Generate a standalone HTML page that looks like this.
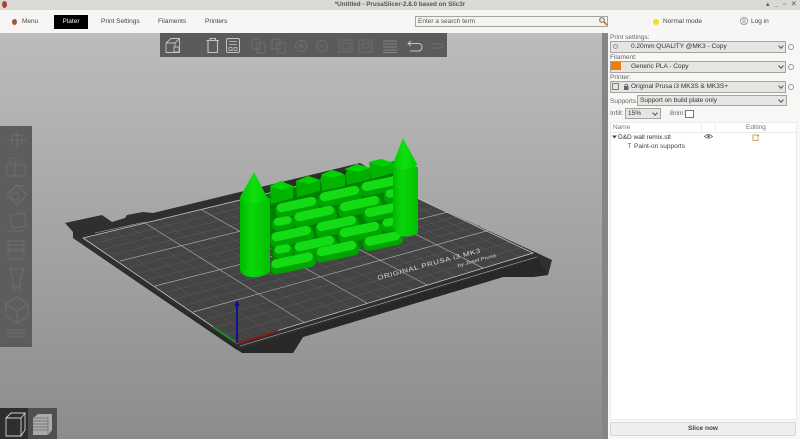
<!DOCTYPE html>
<html><head><meta charset="utf-8"><style>
html,body{margin:0;padding:0;width:800px;height:439px;overflow:hidden;background:#f7f6f4}
body{position:relative;font-family:"Liberation Sans","DejaVu Sans",sans-serif;font-size:6.5px;color:#444;filter:blur(.3px)}
.a{position:absolute;white-space:nowrap}
.box{position:absolute;box-sizing:border-box;border:1px solid #a5a3a0;background:#e6e5e3}
.chev{position:absolute;width:3px;height:3px;border-right:1px solid #555;border-bottom:1px solid #555;transform:rotate(45deg)}
.gear{position:absolute;width:4px;height:4px;border:1.5px solid #999;border-radius:50%;box-sizing:content-box}
</style></head><body>
<div class="a" style="left:0;top:0;width:800px;height:10px;background:#dbd9d5"></div>
<div class="a" style="left:0;top:10px;width:800px;height:23px;background:#f7f6f4"></div>
<div class="a" style="left:2px;top:1px;width:5px;height:7px;border-radius:50%;background:#a8442c"></div>
<div class="a" style="left:0;width:800px;top:1px;text-align:center;font-weight:bold;color:#555;line-height:8px;font-size:6.3px">*Untitled - PrusaSlicer-2.8.0 based on Slic3r</div>
<div class="a" style="left:766px;top:0;font-size:7px;line-height:9px;color:#555;font-weight:bold;word-spacing:3px">▴ _ ▫ ✕</div>
<div class="a" style="left:12px;top:19px;width:5px;height:6px;border-radius:50%;background:#a5533a"></div>
<div class="a" style="left:22px;top:18px;line-height:8px">Menu</div>
<div class="a" style="left:54px;top:15px;width:34px;height:14px;background:#000;color:#eee;text-align:center;line-height:14px">Plater</div>
<div class="a" style="left:101px;top:18px;line-height:8px">Print Settings</div>
<div class="a" style="left:158px;top:18px;line-height:8px">Filaments</div>
<div class="a" style="left:205px;top:18px;line-height:8px">Printers</div>
<div class="box" style="left:415px;top:16px;width:193px;height:11px;background:#f4f3f1;line-height:9px;padding-left:2px;color:#555">Enter a search term</div>
<svg class="a" style="left:598px;top:16px" width="10" height="10"><circle cx="4" cy="4" r="2.3" fill="none" stroke="#8a7a5a" stroke-width="1.2"/><path d="M6 6l3 3" stroke="#b06a20" stroke-width="1.5"/></svg>
<div class="a" style="left:653px;top:19px;width:6px;height:6px;border-radius:50%;background:#f2e01e"></div>
<div class="a" style="left:663px;top:18px;line-height:8px">Normal mode</div>
<svg class="a" style="left:739px;top:16px" width="10" height="10"><circle cx="5" cy="5" r="3.7" fill="none" stroke="#888" stroke-width=".7"/><circle cx="5" cy="4" r="1.3" fill="none" stroke="#888" stroke-width=".6"/><path d="M2.6 7.6q2.4-2 4.8 0" fill="none" stroke="#888" stroke-width=".6"/></svg>
<div class="a" style="left:751px;top:18px;line-height:8px">Log in</div>

<svg class="a" style="left:0;top:33px" width="608" height="406" viewBox="0 33 608 406">
<defs>
<linearGradient id="bg" x1="0" y1="0" x2="0" y2="1"><stop offset="0" stop-color="#bcbcbc"/><stop offset="1" stop-color="#8c8c8c"/></linearGradient>
<linearGradient id="tw" x1="0" y1="0" x2="1" y2="0"><stop offset="0" stop-color="#00b800"/><stop offset=".35" stop-color="#0ad60a"/><stop offset="1" stop-color="#00c000"/></linearGradient>
<linearGradient id="cn" x1="0" y1="0" x2="1" y2="0"><stop offset="0" stop-color="#00c400"/><stop offset=".5" stop-color="#10e010"/><stop offset="1" stop-color="#00cc00"/></linearGradient>
</defs>
<rect x="0" y="33" width="608" height="406" fill="url(#bg)"/>
<rect x="602" y="33" width="6" height="406" fill="#858585"/>
<!-- bed base -->
<path d="M65 223L102 215 112 222 125 218 127 215 143 212 153 213 240 192 360 163 417 198 537 253 552 260 548 275 533 277 503 277 303 337 293 353 242 353 73 238 73 232Z" fill="#2f2f2f"/>
<path d="M83 238L360 171 533 253 237 343Z" fill="#444"/>
<path d="M73 238L237 346 242 353 293 353 303 337 503 277 533 277 548 275 537 258 237 350Z" fill="#282828"/>
<!-- minor grid -->
<g stroke="#626262" stroke-width=".4" fill="none">
<path d="M98.5 234L254 338M114 230.5L271 333M129.500 227L288 328M159 220L320.500 318M173.500 216.500L336 313M188 213L351.500 308M216.500 207L382 298.500M231 203.500L397 294M245.500 200L412 289.500M274 194L441 281M287.500 190.500L455 276.500M301 187L469 272M326 181L495.500 264M337.500 177.500L508 260.500M349 174L520.500 257"/>
<path d="M92 244L370.500 176M101.500 249.500L381 181M111 255L391.500 186M129 267L413.500 196M137.500 273.500L425 201.500M146 280L436.500 207M164.500 292.500L458.500 216.500M174 299L469 221M183.500 305.500L479.500 225.500M204 320L501 236M215 327.500L511.500 241.500M226 335L522.500 247"/>
</g>
<!-- major grid -->
<g stroke="#a8a8a8" stroke-width=".7" fill="none">
<path d="M145 223L305 323M202 210L367 303M260 197L427 285M315 184L483 268"/>
<path d="M120 261L402 191M155 286L448 212M193 312L490 230"/>
</g>
<g stroke="#c8c8c8" stroke-width=".8" fill="none">
<path d="M83 238L237 343 533 253 417 198M83 238L360 171"/>
<path d="M95 233L145 222M240 346L537 257" stroke="#aaa" stroke-width=".6"/>
</g>
<!-- logo -->
<text transform="translate(378 280) rotate(-15) scale(1 .8)" font-family="Liberation Sans" font-size="8" letter-spacing=".6" fill="#d8d8d8">ORIGINAL PRUSA i3 MK3</text>
<text transform="translate(458 267) rotate(-15) scale(1 .8)" font-family="Liberation Sans" font-size="6" fill="#d0d0d0">by Josef Prusa</text>
<!-- axes -->
<path d="M237 343L213 327" stroke="#1f8a25" stroke-width="2"/>
<path d="M238 343L278 331" stroke="#8a1c1c" stroke-width="2"/>
<path d="M237 343V304" stroke="#0a0a9c" stroke-width="1.800"/>
<path d="M234.500 306L237 300 239.500 306Z" fill="#0a0a9c"/>
<!-- wall -->
<path d="M262 196L398 160 410 232 275 274Z" fill="#008000"/>
<!-- crenels -->
<g>
<path d="M270 186L281 181 293 186 293 198 271 204Z" fill="#00b400"/><path d="M270 186L281 181 293 186 282 190Z" fill="#00d400"/>
<path d="M296 181L308 176 320 180 320 191 297 197Z" fill="#00ae00"/><path d="M296 181L308 176 320 180 309 184Z" fill="#00d000"/>
<path d="M320 175L332 170 345 174 345 186 322 191Z" fill="#00b400"/><path d="M320 175L332 170 345 174 333 178Z" fill="#00d400"/>
<path d="M345 169L357 164 370 168 370 179 347 185Z" fill="#00ae00"/><path d="M345 169L357 164 370 168 358 172Z" fill="#00d400"/>
<path d="M369 162L381 159 393 163 393 173 371 179Z" fill="#00b400"/><path d="M369 162L381 159 393 163 382 167Z" fill="#00d000"/>
</g>
<path d="M284 183L296 180 296 184Z M340 172L347 170 345 175Z M314 176L322 174 320 179Z" fill="#1c331c"/>
<!-- stones -->
<g fill="#00a400">
<rect x="360" y="180" width="42" height="13" rx="5" transform="rotate(-12 381 186)"/>
<rect x="318" y="190" width="44" height="14" rx="5" transform="rotate(-12 340 196)"/>
<rect x="275" y="201" width="44" height="14" rx="5" transform="rotate(-12 297 207)"/>
<rect x="384" y="190" width="20" height="12" rx="5" transform="rotate(-10 394 196)"/>
<rect x="338" y="200" width="44" height="14" rx="5" transform="rotate(-12 360 206)"/>
<rect x="293" y="210" width="44" height="14" rx="5" transform="rotate(-12 315 217)"/>
<rect x="272" y="218" width="22" height="12" rx="5" transform="rotate(-10 283 223)"/>
<rect x="363" y="206" width="42" height="13" rx="5" transform="rotate(-12 384 212)"/>
<rect x="315" y="220" width="44" height="14" rx="5" transform="rotate(-12 337 226)"/>
<rect x="270" y="230" width="44" height="14" rx="5" transform="rotate(-12 292 237)"/>
<rect x="381" y="219" width="20" height="12" rx="5" transform="rotate(-10 391 224)"/>
<rect x="338" y="226" width="44" height="14" rx="5" transform="rotate(-12 360 232)"/>
<rect x="293" y="240" width="44" height="14" rx="5" transform="rotate(-12 315 246)"/>
<rect x="273" y="246" width="20" height="12" rx="5" transform="rotate(-10 283 251)"/>
<rect x="363" y="235" width="40" height="13" rx="5" transform="rotate(-12 383 241)"/>
<rect x="315" y="245" width="44" height="14" rx="5" transform="rotate(-12 337 251)"/>
<rect x="270" y="257" width="46" height="14" rx="5" transform="rotate(-12 292 264)"/>
</g>
<g fill="#14dc14">
<rect x="362" y="179" width="38" height="9" rx="4.500" transform="rotate(-12 381 186)"/>
<rect x="320" y="189" width="40" height="9" rx="4.500" transform="rotate(-12 340 196)"/>
<rect x="277" y="200" width="40" height="9" rx="4.500" transform="rotate(-12 297 207)"/>
<rect x="386" y="189" width="16" height="8" rx="4" transform="rotate(-10 394 196)"/>
<rect x="340" y="199" width="40" height="9" rx="4.500" transform="rotate(-12 360 206)"/>
<rect x="295" y="209" width="40" height="9" rx="4.500" transform="rotate(-12 315 217)"/>
<rect x="274" y="217" width="18" height="8" rx="4" transform="rotate(-10 283 223)"/>
<rect x="365" y="205" width="38" height="9" rx="4.500" transform="rotate(-12 384 212)"/>
<rect x="317" y="219" width="40" height="9" rx="4.500" transform="rotate(-12 337 226)"/>
<rect x="272" y="229" width="40" height="9" rx="4.500" transform="rotate(-12 292 237)"/>
<rect x="383" y="218" width="16" height="8" rx="4" transform="rotate(-10 391 224)"/>
<rect x="340" y="225" width="40" height="9" rx="4.500" transform="rotate(-12 360 232)"/>
<rect x="295" y="239" width="40" height="9" rx="4.500" transform="rotate(-12 315 246)"/>
<rect x="275" y="245" width="16" height="8" rx="4" transform="rotate(-10 283 251)"/>
<rect x="365" y="234" width="36" height="9" rx="4.500" transform="rotate(-12 383 241)"/>
<rect x="317" y="244" width="40" height="9" rx="4.500" transform="rotate(-12 337 251)"/>
<rect x="272" y="256" width="42" height="9" rx="4.500" transform="rotate(-12 292 264)"/>
</g>
<!-- towers -->
<path d="M393 167H418V233Q410 238 400 236L393 228Z" fill="url(#tw)"/>
<path d="M392 166L403 138 417 164Q417 168 405 169 394 169 392 166Z" fill="url(#cn)"/>
<path d="M240 198H270V272Q262 278 250 277 242 276 240 270Z" fill="url(#tw)"/>
<path d="M240 197L254 172 268 199Q262 204 252 203 242 202 240 197Z" fill="url(#cn)"/>
<!-- top toolbar -->
<rect x="160" y="33" width="287" height="24" fill="#5b5b5b"/>
<g fill="none" stroke="#c4c4c4" stroke-width=".9">
<path d="M166 43L171 38.500H179.500V52.500H166ZM166 43H175V52.500M175 43L179.500 38.500"/>
<rect x="174" y="47" width="5" height="5" fill="#5b5b5b"/>
<path d="M206.500 40.500H219M208 40.500V52.500H217.500V40.500M210 40.500V38.500H215.500V40.500" stroke-width="1.100"/>
<rect x="226.500" y="38.500" width="13" height="14" rx="1.500" stroke-width="1"/>
<path d="M229 41.500H237M229 44.500H237M229 47.500H232V50.500H229ZM234 47.500H237V50.500H234Z" stroke-width=".8"/>
<path d="M411 41L408 43.500 411 46M408 43.500H418Q422 43.500 422 47 422 51 418 51H410" stroke-width="1"/>
</g>
<g fill="none" stroke="#6f6f6f" stroke-width=".9">
<path d="M252 39H260V49H252ZM257 43H265V53H257ZM272 39H280V49H272ZM277 43H285V53H277Z"/>
<circle cx="301" cy="46" r="5.500"/><path d="M298 46H304M301 43V49"/>
<circle cx="322" cy="46" r="5.500"/><path d="M319 46H325"/>
<rect x="339" y="40" width="13" height="12"/><rect x="342" y="43" width="7" height="6"/>
<rect x="359" y="40" width="13" height="12"/><rect x="363" y="43" width="6" height="5"/>
<path d="M383 41H397M383 44H397M383 47H397M383 50H397M383 52.500H397" stroke="#858585"/>
<path d="M431 44H441Q443 44 443 46T441 48H431"/>
</g>
<!-- left toolbar -->
<rect x="0" y="126" width="32" height="221" fill="#5d5d5d"/>
<g fill="none" stroke="#717171" stroke-width=".8">
<rect x="12" y="135" width="10" height="9"/><path d="M7 140H27M17 130V149"/>
<rect x="7" y="165" width="18" height="11"/><rect x="10" y="158" width="6" height="5"/><path d="M15 165V176"/>
<path d="M17 185L27 195 17 205 7 195ZM12 190Q17 182 24 187"/><circle cx="15" cy="196" r="4"/>
<path d="M10 215L24 213 26 226 12 228ZM6 231H24"/>
<path d="M8 241H24V249H8ZM8 251H24V259H8Z"/><path d="M8 245H24"/>
<path d="M10 269L24 269 20 280V287H13V280ZM14 287V292M19 287V292"/>
<path d="M6 304L17 297 28 304V316L17 323 6 316ZM6 304L17 311 28 304M17 311V323"/>
<rect x="8" y="330" width="16" height="7"/><path d="M9 333H23"/>
</g>
<!-- bottom view switch -->
<rect x="0" y="408" width="28" height="31" fill="#2e2e2e"/>
<rect x="28" y="408" width="29" height="31" fill="#4f4f4f"/>
<path d="M6 418H21V436H6ZM6 418L11 413H25V430L21 436M21 418L25 413" fill="none" stroke="#cfcfcf" stroke-width=".9"/>
<path d="M33 418L38 414H52V430L48 435H33Z" fill="#aaa"/>
<path d="M33 421H48M33 424H48M33 427H48M33 430H48M33 418H48V435" fill="none" stroke="#6c6c6c" stroke-width=".7"/>
</svg>

<!-- right panel -->
<div class="a" style="left:608px;top:33px;width:192px;height:406px;background:#f8f7f5"></div>
<div class="a" style="left:610px;top:34px;line-height:7px;color:#666">Print settings:</div>
<div class="box" style="left:610px;top:41px;width:176px;height:12px;line-height:10px;padding-left:20px;color:#333">0.20mm QUALITY @MK3 - Copy</div>
<div class="gear" style="left:613px;top:44px;width:3px;height:3px"></div>
<div class="chev" style="left:779px;top:44px"></div>
<div class="gear" style="left:788px;top:44px"></div>
<div class="a" style="left:610px;top:54px;line-height:7px;color:#666">Filament:</div>
<div class="box" style="left:610px;top:61px;width:176px;height:12px;line-height:10px;padding-left:20px;color:#333">Generic PLA - Copy</div>
<div class="a" style="left:611px;top:62px;width:10px;height:8px;background:#f07e00"></div>
<div class="chev" style="left:779px;top:64px"></div>
<div class="gear" style="left:788px;top:64px"></div>
<div class="a" style="left:610px;top:74px;line-height:7px;color:#666">Printer:</div>
<div class="box" style="left:610px;top:81px;width:176px;height:12px;line-height:10px;padding-left:20px;color:#333">Original Prusa i3 MK3S &amp; MK3S+</div>
<svg class="a" style="left:612px;top:83px" width="18" height="8"><rect x=".5" y=".5" width="6" height="6" fill="none" stroke="#666" stroke-width=".8"/><rect x="12" y="3" width="4.500" height="4" fill="#666"/><path d="M13 3V1.500H15.500V3" fill="none" stroke="#666" stroke-width=".7"/></svg>
<div class="chev" style="left:779px;top:84px"></div>
<div class="gear" style="left:788px;top:84px"></div>
<div class="a" style="left:610px;top:98px;line-height:7px;color:#666">Supports:</div>
<div class="box" style="left:637px;top:95px;width:150px;height:11px;line-height:9px;padding-left:2px;color:#333">Support on build plate only</div>
<div class="chev" style="left:779px;top:98px"></div>
<div class="a" style="left:610px;top:110px;line-height:7px;color:#666">Infill:</div>
<div class="box" style="left:625px;top:108px;width:36px;height:11px;line-height:9px;padding-left:2px;color:#333">15%</div>
<div class="chev" style="left:653px;top:111px"></div>
<div class="a" style="left:670px;top:110px;line-height:7px;color:#666">Brim:</div>
<div class="a" style="left:685px;top:110px;width:7px;height:6px;border:1px solid #777;background:#fff"></div>
<div class="a" style="left:610px;top:122px;width:187px;height:298px;background:#fff;border:1px solid #ecebe9;box-sizing:border-box"></div>
<div class="a" style="left:611px;top:132px;width:185px;height:1px;background:#eeedeb"></div>
<div class="a" style="left:701px;top:123px;width:1px;height:9px;background:#eeedeb"></div>
<div class="a" style="left:715px;top:123px;width:1px;height:9px;background:#eeedeb"></div>
<div class="a" style="left:613px;top:124px;line-height:7px;color:#777">Name</div>
<div class="a" style="left:746px;top:124px;line-height:7px;color:#777">Editing</div>
<svg class="a" style="left:612px;top:134px" width="6" height="6"><path d="M0 1.500H5L2.500 4.500Z" fill="#444"/></svg>
<div class="a" style="left:618px;top:134px;line-height:7px;color:#333">D&amp;D wall remix.stl</div>
<svg class="a" style="left:704px;top:133px" width="9" height="7"><path d="M.5 3.500Q4.500-.5 8.500 3.500 4.500 7 .5 3.500Z" fill="none" stroke="#555" stroke-width=".8"/><circle cx="4.500" cy="3.300" r="1.200" fill="#555"/></svg>
<svg class="a" style="left:752px;top:134px" width="8" height="7"><path d="M5 1H1V6.500H6V3.500M6 .5V3M4.800 1.700H7.300" fill="none" stroke="#c8873a" stroke-width=".8"/></svg>
<svg class="a" style="left:627px;top:143px" width="5" height="6"><path d="M1 .5H4M2.500 .5V5" stroke="#999" stroke-width="1" fill="none"/></svg>
<div class="a" style="left:634px;top:143px;line-height:7px;color:#444">Paint-on supports</div>
<div class="a" style="left:610px;top:422px;width:186px;height:14px;box-sizing:border-box;border:1px solid #d8d7d5;border-radius:2px;background:#efeeec;text-align:center;line-height:12px;font-weight:bold;color:#444">Slice now</div>
</body></html>
